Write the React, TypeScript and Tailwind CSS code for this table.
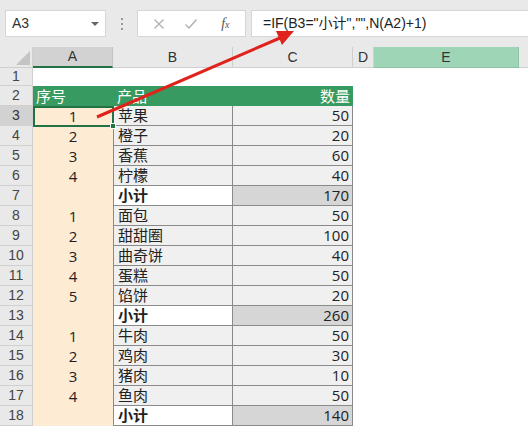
import React from "react";

const font = { fontFamily: "'Liberation Sans', 'Noto Sans CJK SC', sans-serif" };
const cellFont = { fontFamily: "'Open Sans', 'Noto Sans CJK SC', sans-serif" };

type Row = { n: number; a: string; b: string; c: string; sub?: boolean };

const rows: Row[] = [
  { n: 3, a: "1", b: "苹果", c: "50" },
  { n: 4, a: "2", b: "橙子", c: "20" },
  { n: 5, a: "3", b: "香蕉", c: "60" },
  { n: 6, a: "4", b: "柠檬", c: "40" },
  { n: 7, a: "", b: "小计", c: "170", sub: true },
  { n: 8, a: "1", b: "面包", c: "50" },
  { n: 9, a: "2", b: "甜甜圈", c: "100" },
  { n: 10, a: "3", b: "曲奇饼", c: "40" },
  { n: 11, a: "4", b: "蛋糕", c: "50" },
  { n: 12, a: "5", b: "馅饼", c: "20" },
  { n: 13, a: "", b: "小计", c: "260", sub: true },
  { n: 14, a: "1", b: "牛肉", c: "50" },
  { n: 15, a: "2", b: "鸡肉", c: "30" },
  { n: 16, a: "3", b: "猪肉", c: "10" },
  { n: 17, a: "4", b: "鱼肉", c: "50" },
  { n: 18, a: "", b: "小计", c: "140", sub: true },
];

function RowHead({ n, active }: { n: number; active?: boolean }) {
  return (
    <div
      className={
        "w-[33px] shrink-0 h-full flex items-center justify-center border-r border-b border-[#d0d0d0] text-[14px] " +
        (active ? "bg-[#d2d2d2] text-[#333]" : "bg-[#e9e9e9] text-[#444]")
      }
      style={font}
    >
      {n}
    </div>
  );
}

export default function App() {
  return (
    <div className="relative w-[528px] h-[426px] overflow-hidden bg-white" style={font}>
      {/* formula bar */}
      <div className="h-[47px] bg-[#e9e9e9] flex items-center pl-[5px]">
        <div className="w-[101px] h-[27px] bg-white border border-[#d6d6d6] flex items-center justify-between pl-[6px] pr-[6px] text-[14px] text-[#333]">
          <span>A3</span>
          <span className="w-0 h-0 border-l-[4px] border-r-[4px] border-t-[4px] border-l-transparent border-r-transparent border-t-[#666]" />
        </div>
        <div className="w-[31px] flex flex-col items-center gap-[3px]">
          <span className="w-[2px] h-[2px] bg-[#999]" />
          <span className="w-[2px] h-[2px] bg-[#999]" />
          <span className="w-[2px] h-[2px] bg-[#999]" />
        </div>
        <div className="w-[109px] h-[27px] bg-white border border-[#d6d6d6] flex items-center justify-around px-[6px]">
          <svg width="12" height="12" viewBox="0 0 12 12">
            <path d="M1.5 1.5 L10.5 10.5 M10.5 1.5 L1.5 10.5" stroke="#b0b0b0" strokeWidth="1.3" fill="none" />
          </svg>
          <svg width="14" height="12" viewBox="0 0 14 12">
            <path d="M1.5 6.5 L5 10 L12.5 1.5" stroke="#b0b0b0" strokeWidth="1.4" fill="none" />
          </svg>
          <span className="text-[14px] italic text-[#555] pl-[4px]" style={{ fontFamily: "'Liberation Serif', serif" }}>
            f<span className="text-[10px]">x</span>
          </span>
        </div>
        <div className="ml-[5px] flex-1 h-[27px] bg-white border border-r-0 border-[#d6d6d6] flex items-center pl-[11px] text-[14px] text-[#222]">
          =IF(B3="小计","",N(A2)+1)
        </div>
      </div>

      {/* column headers */}
      <div className="h-[21px] flex bg-[#e9e9e9] text-[14px] text-[#333]">
        <div className="w-[33px] shrink-0 h-full border-r border-b border-[#cfcfcf] relative">
          <svg className="absolute right-[2px] bottom-[2px]" width="14" height="14" viewBox="0 0 14 14">
            <polygon points="14,0 14,14 0,14" fill="#c4c4c4" />
          </svg>
        </div>
        <div className="w-[80px] shrink-0 h-full flex items-center justify-center bg-[#d2d2d2] border-r border-[#c4c4c4] border-b-2 border-b-[#217346]">A</div>
        <div className="w-[120px] shrink-0 h-full flex items-center justify-center border-r border-b border-[#cfcfcf]">B</div>
        <div className="w-[120px] shrink-0 h-full flex items-center justify-center border-r border-b border-[#cfcfcf]">C</div>
        <div className="w-[21px] shrink-0 h-full flex items-center justify-center border-r border-b border-[#cfcfcf]">D</div>
        <div className="w-[145px] shrink-0 h-full flex items-center justify-center bg-[#9fd5b7] border-r border-b border-[#8cc4a4]">E</div>
        <div className="flex-1 h-full border-b border-[#cfcfcf]" />
      </div>

      {/* row 1 */}
      <div className="h-[18px] flex">
        <RowHead n={1} />
        <div className="flex-1" />
      </div>

      {/* row 2: table header */}
      <div className="h-[20px] flex">
        <RowHead n={2} />
        <div className="w-[320px] h-full bg-[#379b61] flex items-center text-white text-[15px]" style={cellFont}>
          <span className="w-[80px] pl-[3px]">序号</span>
          <span className="w-[120px] pl-[4px]">产品</span>
          <span className="w-[120px] pr-[3px] text-right">数量</span>
        </div>
        <div className="flex-1" />
      </div>

      {rows.map((r) => (
        <div key={r.n} className="h-[20px] flex" style={cellFont}>
          <RowHead n={r.n} active={r.n === 3} />
          <div className="w-[80px] shrink-0 h-full bg-[#fdebd4] flex items-center justify-center text-[15px] text-[#222]">
            {r.a}
          </div>
          <div
            className={
              "w-[120px] shrink-0 h-full flex items-center pl-[4px] text-[15px] text-[#222] border-l border-r border-b border-[#8a8a8a] " +
              (r.sub ? "bg-white font-bold" : "bg-[#f0f0f0]")
            }
          >
            {r.b}
          </div>
          <div
            className={
              "w-[120px] shrink-0 h-full flex items-center justify-end pr-[3px] text-[15px] text-[#222] border-r border-b border-[#8a8a8a] " +
              (r.sub ? "bg-[#d6d6d6]" : "bg-[#f0f0f0]")
            }
          >
            {r.c}
          </div>
          <div className="flex-1" />
        </div>
      ))}

      {/* selected cell A3 */}
      <div className="absolute left-[33px] top-[106px] w-[81px] h-[21px] border-2 border-[#217346]" />
      <div className="absolute left-[110px] top-[123px] w-[6px] h-[6px] bg-[#217346] border border-white" />

      {/* red arrow */}
      <svg className="absolute left-0 top-0 pointer-events-none" width="528" height="426">
        <line x1="97" y1="117" x2="280" y2="38" stroke="#e0221c" strokeWidth="3" />
        <polygon points="294,31 276,31 282,45" fill="#e0221c" />
      </svg>
    </div>
  );
}
